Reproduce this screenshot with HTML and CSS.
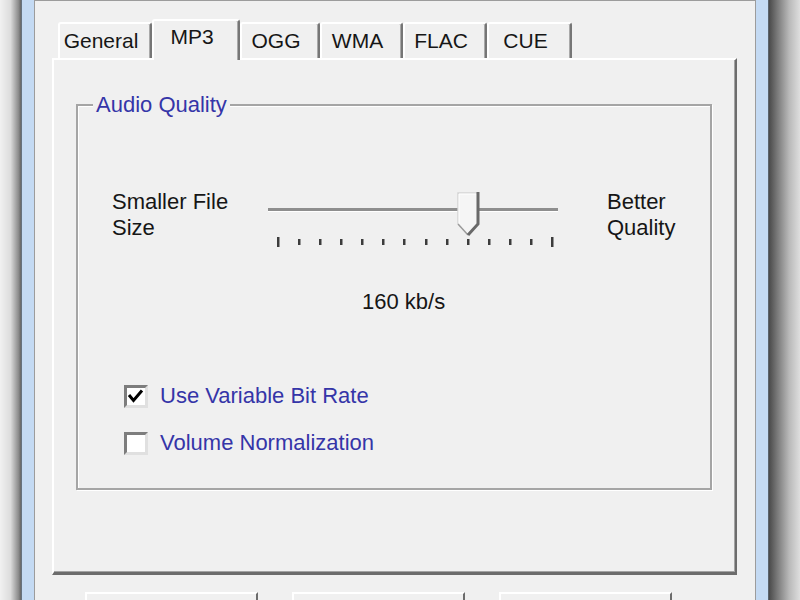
FILE: index.html
```html
<!DOCTYPE html>
<html lang="en">
	<head>
		<meta charset="UTF-8" />
		<meta name="viewport" content="width=device-width, initial-scale=1.0" />
		<title>Encoder Settings</title>
		<link rel="stylesheet" href="styles.css">
	</head>
	<body>
		<div class="shade-left"></div>

		<div class="window">
			<div class="dialog">
				<!-- Tabs -->
				<div class="tabs">
					<div class="tab">General</div>
					<div class="tab active">MP3</div>
					<div class="tab">OGG</div>
					<div class="tab">WMA</div>
					<div class="tab">FLAC</div>
					<div class="tab">CUE</div>
				</div>

				<!-- MP3 page -->
				<div class="panel">
					<fieldset class="group">
						<legend>Audio Quality</legend>

						<div class="slider-row">
							<div class="side-label">Smaller File<br />Size</div>
							<svg class="slider" width="300" height="60" viewBox="0 0 300 60">
								<rect x="6" y="19" width="290" height="3" fill="#8e8e8e" />
								<rect x="6" y="22" width="290" height="1" fill="#ffffff" />
								<g fill="#3c3c3c">
									<rect x="15" y="48" width="2.5" height="10" />
									<rect x="36" y="50" width="2.5" height="6" />
									<rect x="57" y="50" width="2.5" height="6" />
									<rect x="78" y="50" width="2.5" height="6" />
									<rect x="99" y="50" width="2.5" height="6" />
									<rect x="120" y="50" width="2.5" height="6" />
									<rect x="141" y="50" width="2.5" height="6" />
									<rect x="163" y="50" width="2.5" height="6" />
									<rect x="184" y="50" width="2.5" height="6" />
									<rect x="205" y="50" width="2.5" height="6" />
									<rect x="226" y="50" width="2.5" height="6" />
									<rect x="247" y="50" width="2.5" height="6" />
									<rect x="268" y="50" width="2.5" height="6" />
									<rect x="289" y="48" width="2.5" height="10" />
								</g>
								<!-- thumb -->
								<polygon points="196,4 216,4 216,35 206,46 196,35" fill="#f5f5f5" />
								<polyline points="196,35 196,4 215,4" fill="none" stroke="#d4d4d4" stroke-width="1.5" />
								<polyline points="197,35 197,5 214,5" fill="none" stroke="#ffffff" stroke-width="1" />
								<polyline points="196,35 206,46" fill="none" stroke="#9a9a9a" stroke-width="1.5" />
								<polyline points="216,3 216,35 206,46" fill="none" stroke="#696969" stroke-width="3" />
							</svg>
							<div class="side-label right">Better<br />Quality</div>
						</div>

						<div class="value">160 kb/s</div>

						<label class="check first">
							<span class="box">
								<svg width="18" height="17" viewBox="0 0 18 17">
									<path d="M2 7 L6.5 12.5 L15 2.5" fill="none" stroke="#000" stroke-width="3" />
								</svg>
							</span>
							Use Variable Bit Rate
						</label>
						<label class="check">
							<span class="box"></span>
							Volume Normalization
						</label>
					</fieldset>
				</div>

				<!-- Dialog buttons (only their top edge is in view) -->
				<div class="buttons">
					<button class="btn"></button>
					<button class="btn"></button>
					<button class="btn"></button>
				</div>
			</div>
		</div>

		<div class="shade-right"></div>
	</body>
</html>
```

FILE: styles.css
```css
* {
	box-sizing: border-box;
}
html,
body {
	margin: 0;
}
body {
	width: 800px;
	height: 600px;
	overflow: hidden;
	display: flex;
	font-family: 'Liberation Sans', Arial, sans-serif;
	font-size: 22px;
	line-height: 26px;
	color: #161616;
	background: #f0f0f0;
}
.shade-left {
	width: 21px;
	background: linear-gradient(to right, #f1f1f1, #dcdcdc 50%, #8c8c8c 88%, #666);
}
.shade-right {
	flex: 1;
	background: linear-gradient(to right, #4a4a4a, #767676 25%, #b9b9b9 65%, #dedede);
}
.window {
	width: 748px;
	border-left: 1px solid #66727f;
	border-right: 1px solid #5a636d;
	padding: 0 12px;
	background: #c4daf3;
}
.dialog {
	height: 100%;
	overflow: hidden;
	background: #f0f0f0;
	border: 1px solid #9c9c9c;
	border-bottom: none;
	padding: 18px 18px 0 17px;
}

/* tabs */
.tabs {
	display: flex;
	align-items: flex-end;
	height: 39px;
	margin-left: 6px;
}
.tab {
	height: 36px;
	padding: 4px 8px 0 0;
	text-align: center;
	font-size: 21px;
	border: 2px solid #fff;
	border-bottom: none;
	border-right-color: #767676;
	border-radius: 3px 3px 0 0;
	box-shadow: inset -1px 0 0 #a9a9a9;
	background: #f0f0f0;
}
.tab:nth-child(1) {
	width: 94px;
}
.tab:nth-child(2) {
	width: 88px;
}
.tab:nth-child(3) {
	width: 80px;
}
.tab:nth-child(4) {
	width: 83px;
}
.tab:nth-child(5) {
	width: 84px;
}
.tab:nth-child(6) {
	width: 85px;
}
.tab.active {
	height: 41px;
	padding-top: 3px;
	margin-bottom: -2px;
	position: relative;
	z-index: 1;
}

/* page */
.panel {
	border: 2px solid #fff;
	border-right-color: #6c6c6c;
	border-bottom: 3px solid #6c6c6c;
	box-shadow: inset -1px -1px 0 #a3a3a3;
	padding: 32px 23px 82px 22px;
}
.group {
	margin: 0;
	min-width: 0;
	padding: 0 0 32px;
	border: 2px solid #a5a5a5;
	box-shadow: 1px 1px 0 #fff, inset 1px 1px 0 #fff;
}
.group legend {
	margin-left: 15px;
	padding: 0 3px;
	color: #3535a8;
	background: #f0f0f0;
}
.slider-row {
	display: flex;
	align-items: flex-start;
	margin-top: 71px;
	padding-left: 34px;
}
.side-label {
	width: 150px;
}
.side-label.right {
	width: auto;
	margin-left: 45px;
}
.slider {
	display: block;
}
.value {
	margin-top: 40px;
	padding-left: 284px;
}
.check {
	display: flex;
	align-items: center;
	gap: 12px;
	margin-top: 21px;
	padding-left: 46px;
	color: #3535a8;
}
.check.first {
	margin-top: 68px;
}
.box {
	width: 24px;
	height: 23px;
	border: 3px solid;
	border-color: #7d7d7d #e0e0e0 #e0e0e0 #7d7d7d;
	background: #fff;
}
.box svg {
	display: block;
}

/* buttons */
.buttons {
	display: flex;
	gap: 34px;
	margin-top: 17px;
	padding-left: 33px;
}
.btn {
	width: 173px;
	height: 8px;
	padding: 0;
	border: 2px solid #fff;
	border-bottom: none;
	border-right-color: #6c6c6c;
	background: #f0f0f0;
}
```
